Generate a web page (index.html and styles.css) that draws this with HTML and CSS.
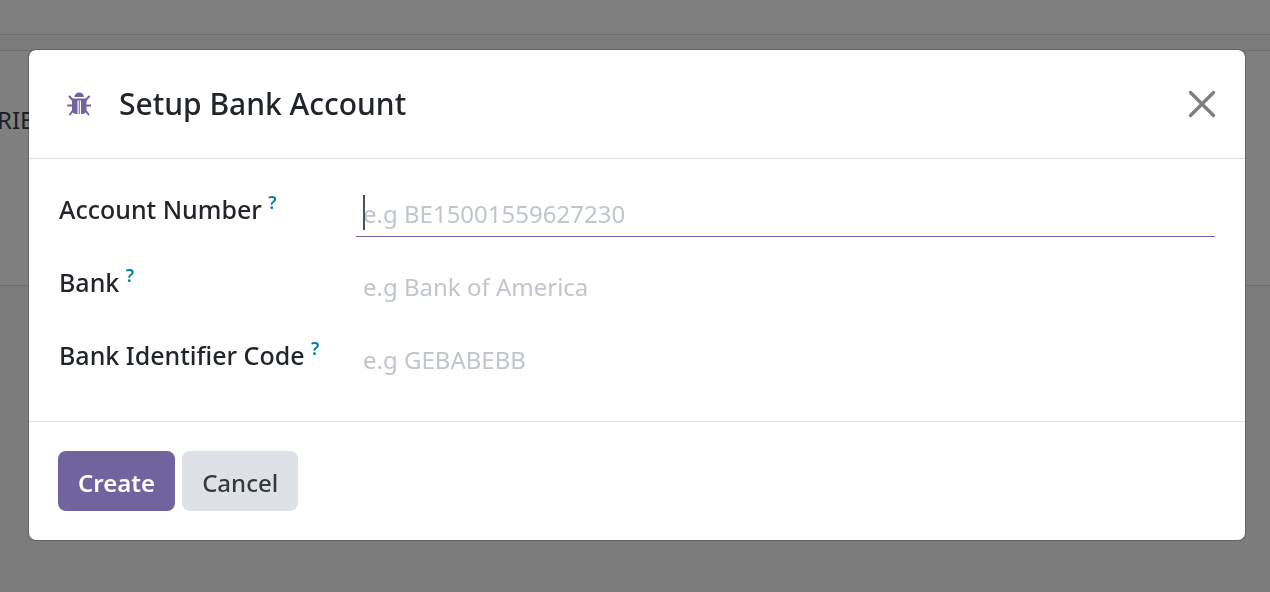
FILE: index.html
```html
<!DOCTYPE html>
<html lang="en">
<head>
  <meta charset="UTF-8">
  <meta name="viewport" content="width=device-width, initial-scale=1.0">
  <title>Setup Bank Account</title>
  <link rel="stylesheet" href="styles.css">
</head>
<body>
  <div class="page">
    <div class="page-bar"></div>
    <div class="page-card">RIE</div>
  </div>
  <div class="overlay">
    <div class="modal" role="dialog" aria-labelledby="modal-title">
      <div class="modal-header">
        <button type="button" class="debug" aria-label="Debug">
          <svg width="24" height="24" viewBox="0 0 24 24">
            <path d="M7.500 5a4.700 4.500 0 0 1 9.400 0z" fill="currentColor"/>
            <path d="M5 6.500h14.500v11a4 4.500 0 0 1-4 4.500h-1.500V8.500h-3.500V22H9a4 4.500 0 0 1-4-4.500z" fill="currentColor"/>
            <path d="M11.700 8.500h1.300v13.500h-1.300z" fill="currentColor" opacity=".8"/>
            <path d="M2.500 4.500l3.500 4M22 4.500l-3.500 4M1 13.500h5M18.500 13.500h5M6 18.500l-3 4M18.500 18.500l3 4" fill="none" stroke="currentColor" stroke-width="2" stroke-linecap="round"/>
          </svg>
        </button>
        <h4 id="modal-title">Setup Bank Account</h4>
        <button type="button" class="close" aria-label="Close">
          <svg width="28" height="28" viewBox="0 0 28 28">
            <path d="M2.500 2.500l23 23M25.500 2.500l-23 23" fill="none" stroke="currentColor" stroke-width="3.400" stroke-linecap="round"/>
          </svg>
        </button>
      </div>
      <form class="modal-body" id="bank-form">
        <div class="field">
          <label for="acc-number">Account Number <sup>?</sup></label>
          <div class="control focused">
            <input type="text" id="acc-number" placeholder="e.g BE15001559627230">
            <span class="caret"></span>
          </div>
        </div>
        <div class="field">
          <label for="bank">Bank <sup>?</sup></label>
          <div class="control">
            <input type="text" id="bank" placeholder="e.g Bank of America">
          </div>
        </div>
        <div class="field">
          <label for="bic">Bank Identifier Code <sup>?</sup></label>
          <div class="control">
            <input type="text" id="bic" placeholder="e.g GEBABEBB">
          </div>
        </div>
      </form>
      <div class="modal-footer">
        <button type="submit" form="bank-form" class="btn btn-primary">Create</button>
        <button type="button" class="btn btn-secondary">Cancel</button>
      </div>
    </div>
  </div>
</body>
</html>
```
FILE: styles.css
```css
* {
  box-sizing: border-box;
}
body {
  margin: 0;
  min-height: 100vh;
  overflow: hidden;
  font-family: "Noto Sans", "Open Sans", sans-serif;
  font-size: 24px;
  line-height: 36px;
  color: #212529;
  background-color: #f8f8f8;
}
.page-bar {
  height: 35px;
  margin-bottom: 15px;
  background-color: #fff;
  border-bottom: 1px solid #dcdcdc;
}
.page-card {
  height: 236px;
  padding: 51px 0;
  margin-left: -3px;
  background-color: #fff;
  border-top: 1px solid #dcdcdc;
  border-bottom: 1px solid #dcdcdc;
  color: #374151;
}
.overlay {
  position: fixed;
  inset: 0;
  padding: 49px 24px 24px 28px;
  background-color: rgba(0, 0, 0, 0.5);
}
.modal {
  background-color: #fff;
  background-clip: padding-box;
  border: 1px solid rgba(0, 0, 0, 0.2);
  border-radius: 8px;
}
.modal-header {
  display: flex;
  align-items: center;
  height: 109px;
  padding: 0 29px 0 38px;
  border-bottom: 1px solid #dee2e6;
}
.modal-header button {
  display: flex;
  padding: 0;
  border: none;
  background: none;
  cursor: pointer;
}
.modal-header h4 {
  margin: 0 auto 0 28px;
  font-size: 30px;
  font-weight: 500;
  line-height: 36px;
}
.modal-header .debug {
  color: #71639e;
}
.modal-header .close {
  color: #7f7f7f;
}
.modal-body {
  display: flex;
  flex-direction: column;
  gap: 27px;
  padding: 32px 30px 38px;
}
.field {
  display: flex;
  align-items: flex-start;
}
.field label {
  width: 297px;
  font-size: 25px;
  font-weight: 500;
}
.field sup {
  vertical-align: 10px;
  font-size: 18px;
  font-weight: 600;
  line-height: 1;
  color: #0180a5;
}
.control {
  position: relative;
  flex: 1;
  border-bottom: 1px solid transparent;
}
.control.focused {
  border-color: #71639e;
}
.control input {
  display: block;
  width: 100%;
  height: 45px;
  padding: 0 7px;
  border: none;
  outline: none;
  background: none;
  font: inherit;
  color: #495057;
  caret-color: transparent;
}
.control input::placeholder {
  color: #c0c6cc;
  opacity: 1;
}
.caret {
  position: absolute;
  top: 4px;
  left: 7px;
  width: 2px;
  height: 35px;
  background-color: #495057;
}
.modal-footer {
  display: flex;
  gap: 7px;
  padding: 29px;
  border-top: 1px solid #dee2e6;
}
.btn {
  height: 60px;
  padding: 4px 20px 0;
  border: none;
  border-radius: 8px;
  font: inherit;
  font-weight: 500;
  cursor: pointer;
}
.btn-primary {
  background-color: #71639e;
  color: #fff;
  font-weight: 600;
}
.btn-secondary {
  background-color: #dee2e6;
  color: #343a40;
}
```
